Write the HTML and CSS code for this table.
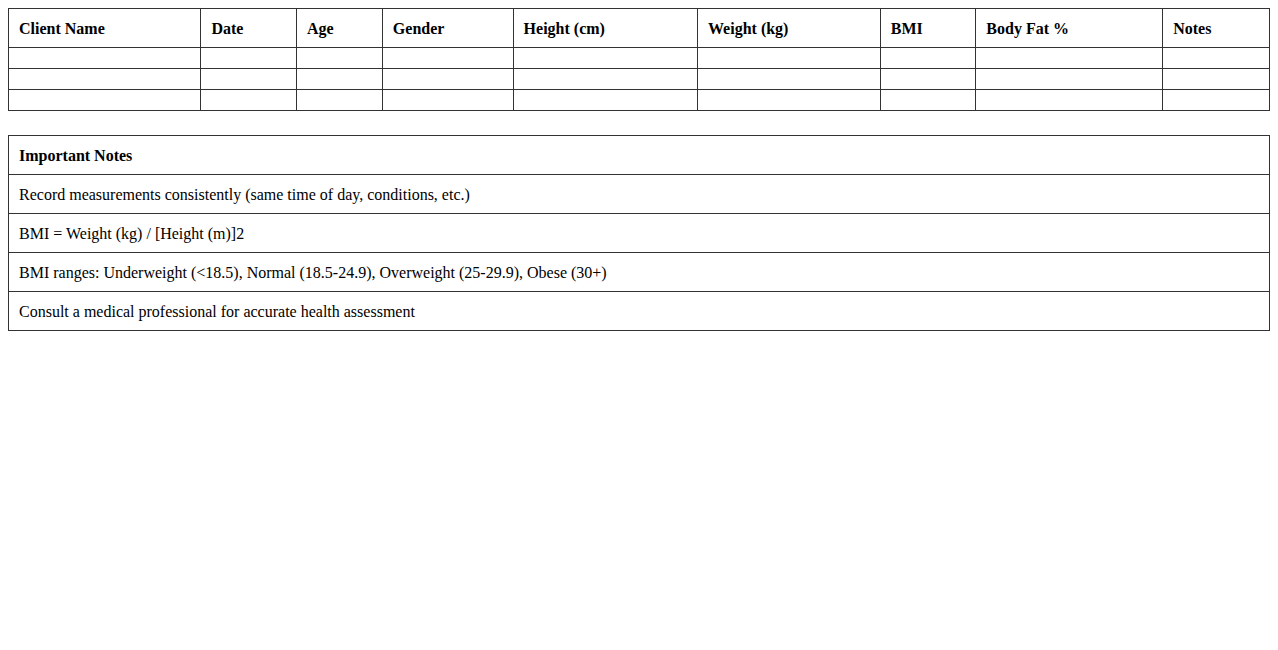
FILE: index.html
```html
<!DOCTYPE html>
<html>
<head>
<meta charset="utf-8">
<title>Client Measurements</title>
<link rel="stylesheet" href="styles.css">
</head>
<body>
<table class="log">
  <thead>
    <tr>
      <th>Client Name</th>
      <th>Date</th>
      <th>Age</th>
      <th>Gender</th>
      <th>Height (cm)</th>
      <th>Weight (kg)</th>
      <th>BMI</th>
      <th>Body Fat %</th>
      <th>Notes</th>
    </tr>
  </thead>
  <tbody>
    <tr><td></td><td></td><td></td><td></td><td></td><td></td><td></td><td></td><td></td></tr>
    <tr><td></td><td></td><td></td><td></td><td></td><td></td><td></td><td></td><td></td></tr>
    <tr><td></td><td></td><td></td><td></td><td></td><td></td><td></td><td></td><td></td></tr>
  </tbody>
</table>
<table class="notes">
  <thead>
    <tr><th>Important Notes</th></tr>
  </thead>
  <tbody>
    <tr><td>Record measurements consistently (same time of day, conditions, etc.)</td></tr>
    <tr><td>BMI = Weight (kg) / [Height (m)]2</td></tr>
    <tr><td>BMI ranges: Underweight (&lt;18.5), Normal (18.5-24.9), Overweight (25-29.9), Obese (30+)</td></tr>
    <tr><td>Consult a medical professional for accurate health assessment</td></tr>
  </tbody>
</table>
</body>
</html>
```
FILE: styles.css
```css
body {
  margin: 8px;
  font-family: "Liberation Serif", "Times New Roman", serif;
  font-size: 16px;
  color: #000;
  background: #fff;
}
table {
  width: 100%;
  border-collapse: collapse;
}
th, td {
  border: 1px solid #333;
  padding: 11px 10px 9px;
  text-align: left;
  line-height: 18px;
}
th {
  font-weight: bold;
}
.log {
  margin-bottom: 24px;
}
```
